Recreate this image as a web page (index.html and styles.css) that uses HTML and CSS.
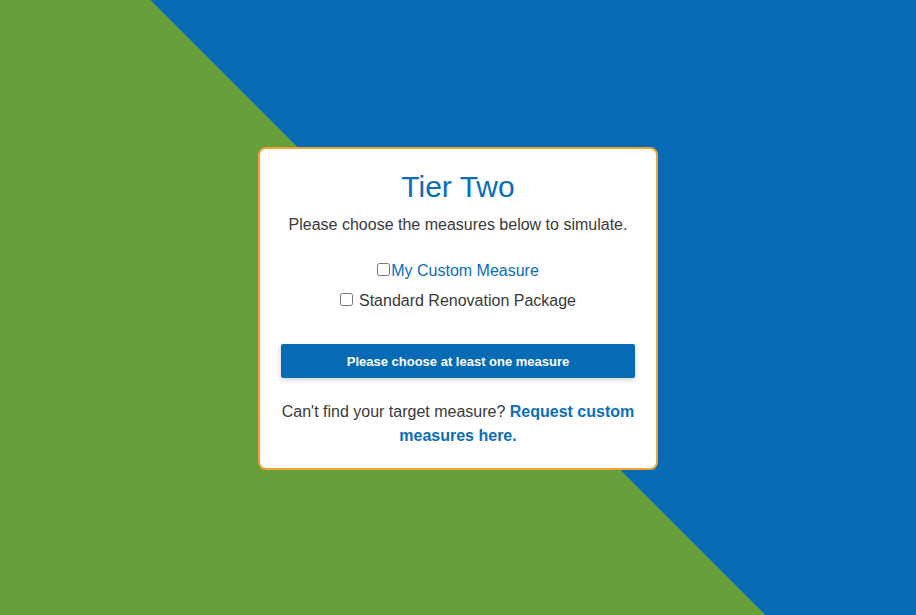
FILE: index.html
```html
<!DOCTYPE html>
<html lang="en">
<head>
<meta charset="utf-8">
<title>Tier Two</title>
<link rel="stylesheet" href="styles.css">
</head>
<body>
<main class="stage">
  <section class="card">
    <h1 class="card-title">Tier Two</h1>
    <p class="card-sub">Please choose the measures below to simulate.</p>
    <div class="options">
      <label class="option option-link"><input type="checkbox" class="check check-tight"><span>My Custom Measure</span></label>
      <label class="option"><input type="checkbox" class="check"><span>Standard Renovation Package</span></label>
    </div>
    <button class="primary" type="button">Please choose at least one measure</button>
    <p class="card-foot">Can't find your target measure? <a class="foot-link" href="#">Request custom measures here.</a></p>
  </section>
</main>
</body>
</html>
```
FILE: styles.css
```css
html, body {
  margin: 0;
  padding: 0;
}
body {
  width: 916px;
  height: 615px;
  overflow: hidden;
  font-family: "Liberation Sans", Arial, sans-serif;
  color: #3a3a3a;
  background: linear-gradient(45deg, #67a03b 49.97%, #066bb4 49.97%);
}
.stage {
  height: 615px;
  display: flex;
  align-items: center;
  justify-content: center;
}
.card {
  box-sizing: border-box;
  width: 400px;
  margin-top: 2px;
  background: #ffffff;
  border: 2px solid #f2a134;
  border-radius: 8px;
  padding: 20px 21px 20px;
  text-align: center;
}
.card-title {
  margin: 0 0 8px;
  font-size: 30px;
  line-height: 36px;
  font-weight: normal;
  color: #0a6db8;
}
.card-sub {
  margin: 0;
  font-size: 16px;
  line-height: 24px;
}
.options {
  margin-top: 22px;
  display: flex;
  flex-direction: column;
  gap: 6px;
}
.option {
  display: block;
  font-size: 16px;
  line-height: 24px;
}
.option-link {
  color: #0a6db8;
}
.check {
  width: 13px;
  height: 13px;
  margin: 0 6px 0 0;
  vertical-align: baseline;
}
.check-tight {
  margin: 0 1px 2px 0;
}
.primary {
  display: block;
  width: 100%;
  height: 34px;
  margin-top: 31px;
  border: 0;
  border-radius: 2px;
  background: #066bb4;
  color: #ffffff;
  font-family: "Liberation Sans", Arial, sans-serif;
  font-size: 13px;
  font-weight: bold;
  box-shadow: 0 2px 5px rgba(0, 0, 0, 0.18);
  padding: 0;
}
.card-foot {
  margin: 22px 0 0;
  font-size: 16px;
  line-height: 24px;
}
.foot-link {
  color: #0a6db8;
  font-weight: bold;
  text-decoration: none;
}
```
